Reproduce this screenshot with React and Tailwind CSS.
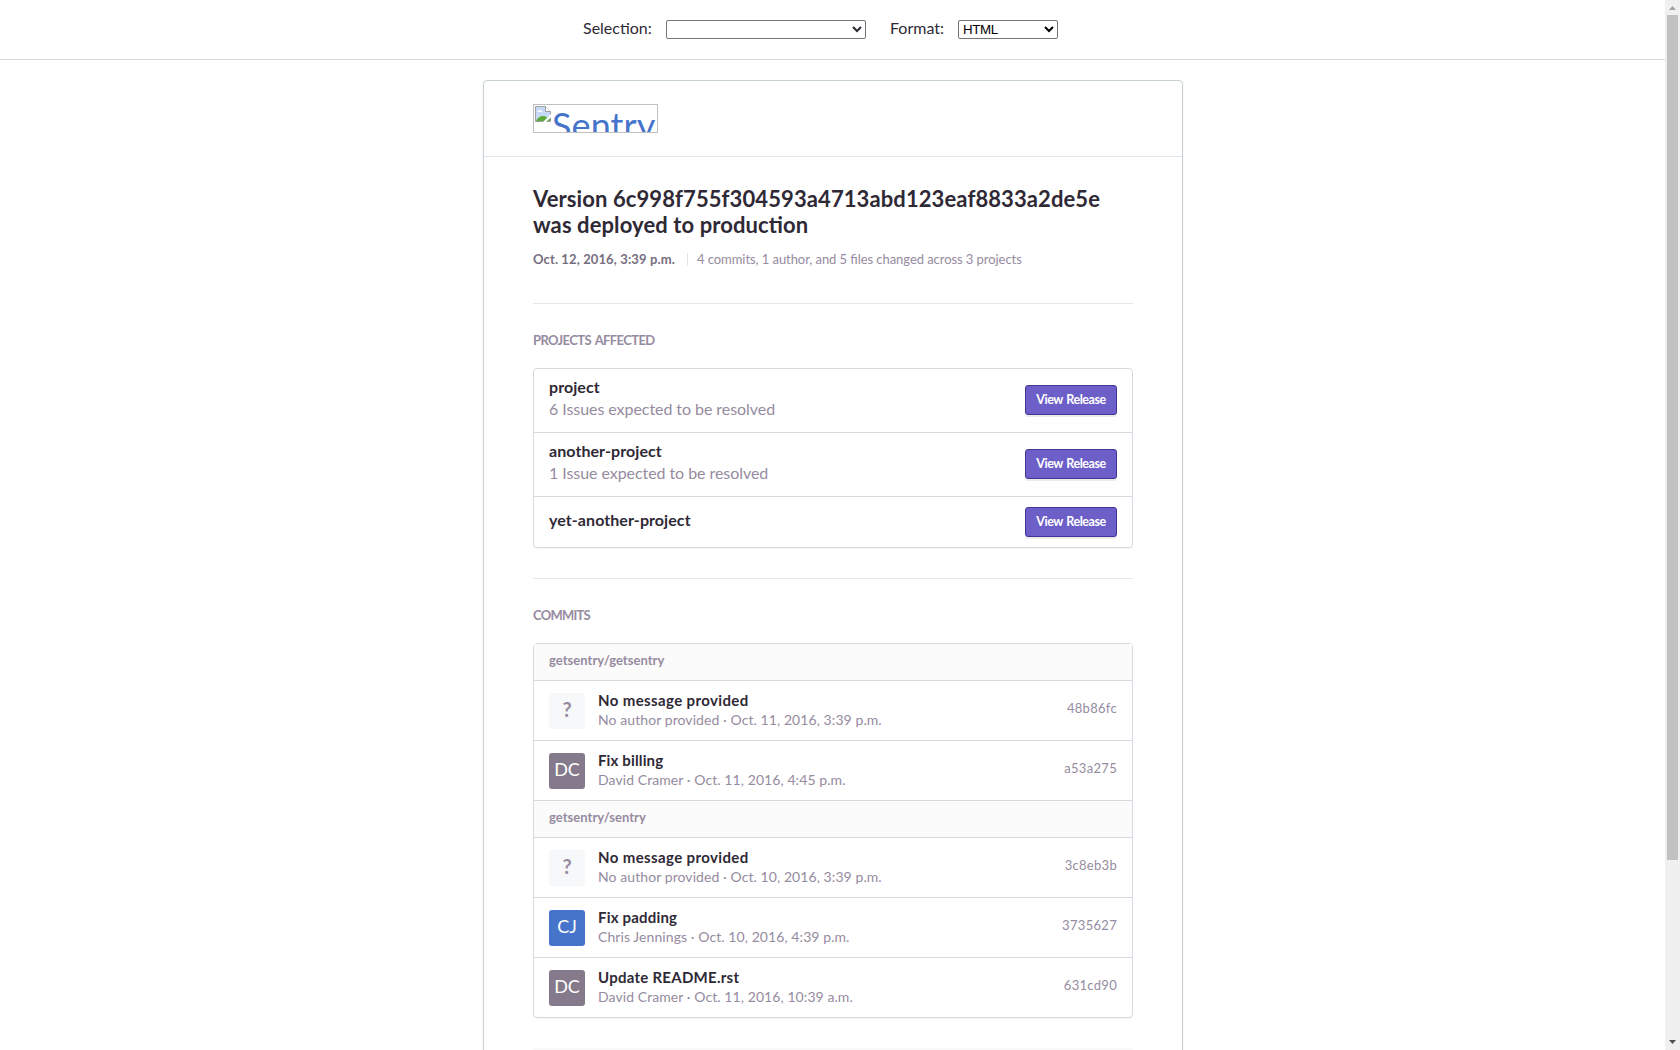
const projects = [
  { name: 'project', note: '6 Issues expected to be resolved' },
  { name: 'another-project', note: '1 Issue expected to be resolved' },
  { name: 'yet-another-project' },
];

const repos = [
  {
    name: 'getsentry/getsentry',
    commits: [
      { initials: '?', title: 'No message provided', meta: 'No author provided · Oct. 11, 2016, 3:39 p.m.', hash: '48b86fc' },
      { initials: 'DC', title: 'Fix billing', meta: 'David Cramer · Oct. 11, 2016, 4:45 p.m.', hash: 'a53a275' },
    ],
  },
  {
    name: 'getsentry/sentry',
    commits: [
      { initials: '?', title: 'No message provided', meta: 'No author provided · Oct. 10, 2016, 3:39 p.m.', hash: '3c8eb3b' },
      { initials: 'CJ', title: 'Fix padding', meta: 'Chris Jennings · Oct. 10, 2016, 4:39 p.m.', hash: '3735627' },
      { initials: 'DC', title: 'Update README.rst', meta: 'David Cramer · Oct. 11, 2016, 10:39 a.m.', hash: '631cd90' },
    ],
  },
];

const avatarStyles = {
  '?': 'bg-[#f7f8f9] text-[#968ba0] font-bold text-xl',
  DC: 'bg-[#847a8c] text-white text-lg',
  CJ: 'bg-[#4674ca] text-white text-lg',
};

const titleTracking = {
  'No message provided': 'tracking-[0.38px]',
  'Fix billing': 'tracking-[0.14px]',
  'Fix padding': 'tracking-[0.19px]',
  'Update README.rst': 'tracking-[0.26px]',
};

function Toolbar() {
  return (
    <header className="flex h-[60px] shrink-0 justify-center border-b border-[#d9d9d9] pt-4 leading-6">
      <label className="mr-6 flex">
        <span className="w-[83px]">Selection:</span>
        <select className="mt-1 h-[19px] w-[200px] rounded-[2px] border border-[#767676] bg-white" />
      </label>
      <label className="mr-6 flex">
        <span className="w-[68px]">Format:</span>
        <select className="mt-1 h-[19px] w-[100px] rounded-[2px] border border-[#767676] bg-white font-['Liberation_Sans'] text-[13.333px] leading-[15px] tracking-[-0.4px] text-black">
          <option>HTML</option>
        </select>
      </label>
    </header>
  );
}

function BrokenImage() {
  return (
    <div className="flex h-[29px] w-[125px] overflow-hidden border border-[#c0c0c0] pt-px pl-px">
      <svg className="h-4 w-4 shrink-0" viewBox="0 0 16 16">
        <path d="M.5.5h10l5 5v10H.5z" fill="#c6d9f7" stroke="#a0a0a0" />
        <path d="M10.5.5v5h5" fill="#fff" stroke="#a0a0a0" />
        <path d="M2.500 5.500c0-1.400 1.600-1.800 2.200-.8 1.200-1 2.800 0 2.600 1.200H2.500z" fill="#fff" />
        <path d="M1 15c1-3 4-5 7-5S13 12 15 13v2H1z" fill="#5bab3c" />
        <path d="M8 16l8-8v3l-5 5z" fill="#fff" />
      </svg>
      <span className="pl-px text-4xl leading-[38px] tracking-[0.1px] text-[#4674ca]">Sentry</span>
    </div>
  );
}

function ProjectRow({ project }) {
  return (
    <div className={`flex justify-between border-b border-[#dad7e0] px-[15px] last:border-b-0 ${project.note ? 'h-16 pt-4' : 'h-[50px] pt-2.5'}`}>
      <div className={project.note ? '-mt-2.5' : 'pt-px'}>
        <div className="text-base leading-6 font-bold tracking-[0.07px]">{project.name}</div>
        {project.note && <div className="-mt-0.5 text-base leading-6 tracking-[-0.06px] text-[#968ba0]">{project.note}</div>}
      </div>
      <button className="h-[30px] w-[92px] rounded-[3px] border border-[#413496] bg-[#6c5fc7] text-[12.5px] leading-[28px] font-bold tracking-[-0.45px] [word-spacing:1px] text-white shadow-[0_2px_0_rgba(0,0,0,0.08)]">
        View Release
      </button>
    </div>
  );
}

function CommitRow({ commit }) {
  return (
    <div className="flex h-[60px] border-b border-[#dad7e0] px-[15px] last:h-[59px] last:border-b-0">
      <div className={`mt-3 mr-[13px] flex h-9 w-9 justify-center rounded-[3px] ${avatarStyles[commit.initials]}`}>
        <span className="leading-[33px]">{commit.initials}</span>
      </div>
      <div className="grow pt-[9px]">
        <div className={`text-[15px] leading-5 font-bold ${titleTracking[commit.title]}`}>{commit.title}</div>
        <div className="text-sm leading-[19px] tracking-[0.08px] text-[#968ba0]">{commit.meta}</div>
      </div>
      <div className="pt-[17px] text-[13px] leading-5 tracking-[0.3px] text-[#968ba0]">{commit.hash}</div>
    </div>
  );
}

function Scrollbar() {
  return (
    <div className="flex h-full w-[15px] shrink-0 flex-col items-center bg-[#f0f0f0]">
      <svg className="h-[15px] w-[15px] shrink-0" viewBox="0 0 15 15"><path d="M4 10l3.500-4L11 10z" fill="#a3a3a3" /></svg>
      <div className="h-[845px] w-[11px] bg-[#c1c1c1]" />
      <div className="grow" />
      <svg className="h-[15px] w-[15px] shrink-0" viewBox="0 0 15 15"><path d="M4 5h7l-3.500 4z" fill="#505050" /></svg>
    </div>
  );
}

export default function App() {
  return (
    <div className="flex h-[1050px] w-[1680px] overflow-hidden bg-white font-[Lato,sans-serif] text-base text-[#2f2936]">
      <div className="flex h-full grow flex-col overflow-hidden">
        <Toolbar />
        <div className="flex justify-center pt-5 pl-px">
          <main className="h-[1100px] w-[700px] shrink-0 rounded-t border border-[#c7d0d4] shadow-[0_1px_3px_rgba(0,0,0,0.06)]">
            <div className="h-[76px] border-b border-[#dee7eb] px-[49px] pt-[23px]">
              <BrokenImage />
            </div>
            <div className="px-[49px] pt-[29px]">
              <h2 className="text-[22px] leading-[26px] font-bold tracking-[0.1px] [font-feature-settings:'liga'_1]">
                Version 6c998f755f304593a4713abd123eaf8833a2de5e was deployed to production
              </h2>
              <div className="mt-[11px] flex text-[13px] leading-5 text-[#968ba0]">
                <div className="w-[154px] font-bold tracking-[0.12px] text-[#776e80]">Oct. 12, 2016, 3:39 p.m.</div>
                <div className="mt-1 mr-[9px] h-[13px] w-px bg-[#e7e3eb]" />
                <div className="tracking-[-0.06px] [font-feature-settings:'liga'_1]">4 commits, 1 author, and 5 files changed across 3 projects</div>
              </div>
              <hr className="mt-[34px] border-[#e7e7eb]" />
              <h3 className="mt-[26px] text-[13px] leading-5 font-bold tracking-[-0.6px] [word-spacing:1.6px] text-[#968ba0]">PROJECTS AFFECTED</h3>
              <div className="mt-[18px] rounded-[4px] border border-[#dad7e0] shadow-[0_1px_1px_rgba(0,0,0,0.04)]">
                {projects.map((p) => <ProjectRow key={p.name} project={p} />)}
              </div>
              <hr className="mt-[30px] border-[#e7e7eb]" />
              <h3 className="mt-[26px] text-[13px] leading-5 font-bold tracking-[-0.75px] text-[#968ba0]">COMMITS</h3>
              <div className="mt-[18px] rounded-[4px] border border-[#dad7e0] shadow-[0_1px_1px_rgba(0,0,0,0.04)]">
                {repos.map((repo) => (
                  <div key={repo.name} className="border-b border-[#dad7e0] last:border-b-0">
                    <div className="h-[37px] border-b border-[#dad7e0] bg-[#fbfbfc] px-[15px] pt-1.5 text-[13px] leading-5 font-bold tracking-[0.03px] text-[#968ba0]">{repo.name}</div>
                    {repo.commits.map((c) => <CommitRow key={c.hash} commit={c} />)}
                  </div>
                ))}
              </div>
              <div className="mt-[30px] h-10 bg-[#f9f9fa]" />
            </div>
          </main>
        </div>
      </div>
      <Scrollbar />
    </div>
  );
}
